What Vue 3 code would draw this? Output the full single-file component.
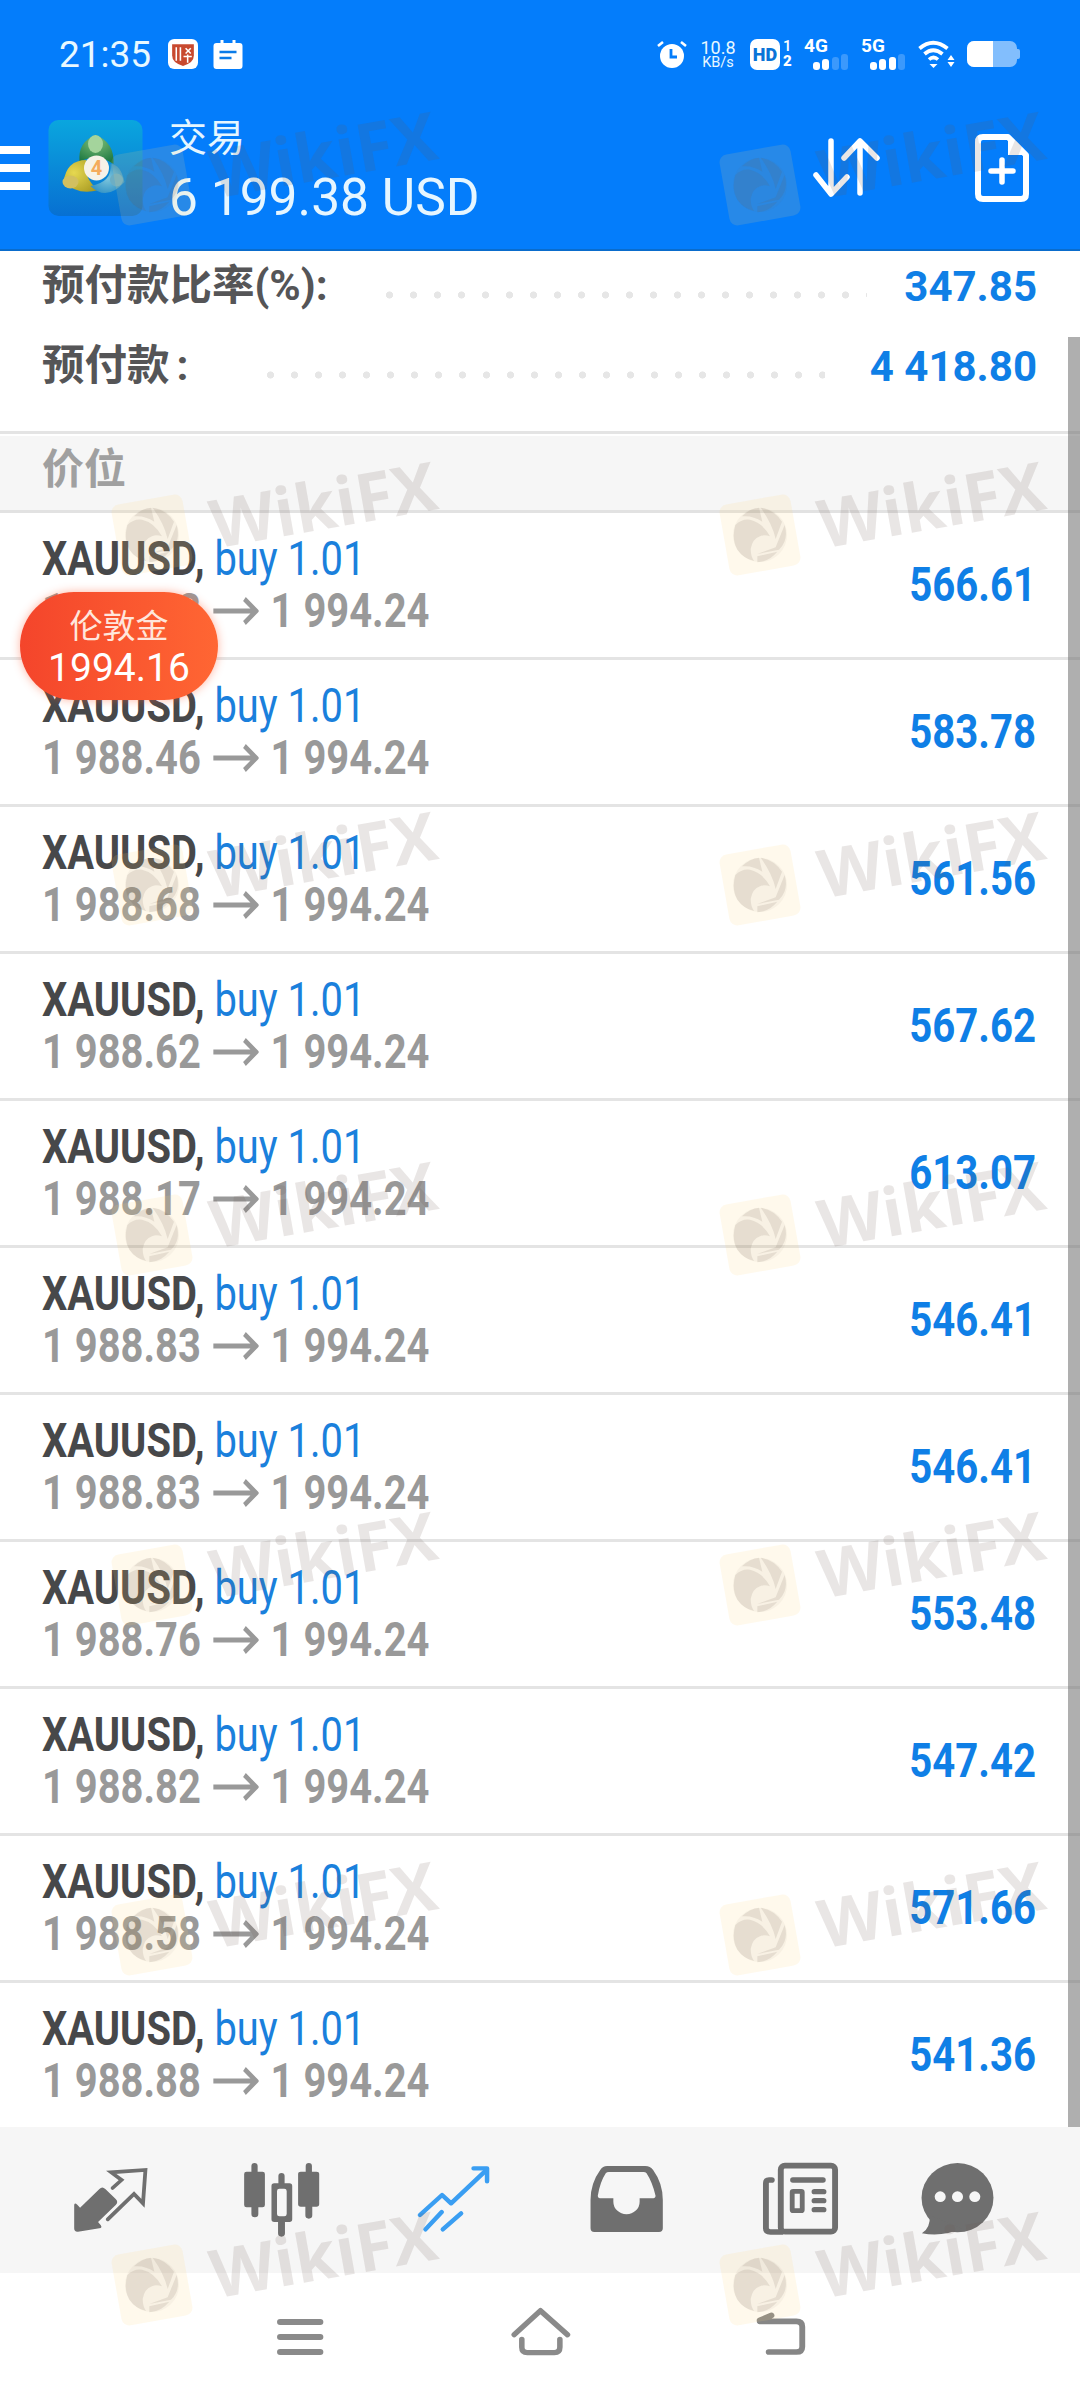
<script setup>
const rows = [
  ['1 988.63', '566.61'], ['1 988.46', '583.78'], ['1 988.68', '561.56'], ['1 988.62', '567.62'],
  ['1 988.17', '613.07'], ['1 988.83', '546.41'], ['1 988.83', '546.41'], ['1 988.76', '553.48'],
  ['1 988.82', '547.42'], ['1 988.58', '571.66'], ['1 988.88', '541.36']
]
const marks = Array.from({ length: 14 }, (_, i) => i)
</script>

<template>
  <div class="screen">
    <header class="header">
      <div class="status">
        <div class="status-left">
          <span class="time">21:35</span>
          <svg class="app-badge" viewBox="0 0 29 29">
            <rect width="29" height="29" rx="6" fill="#fff" />
            <path d="M4 5h21v11q0 7-10.500 10Q4 23 4 16z" fill="#c8492f" />
            <path d="M8 8v13M12 8v13M17 9l5 5M22 9l-5 5M15 17h8M19 15v8" stroke="#fff" stroke-width="1.500" fill="none" />
          </svg>
          <svg class="cal" viewBox="0 0 29 29">
            <path d="M3 3h4V0h3v3h9V0h3v3h4q3 0 3 3v20q0 3-3 3H3q-3 0-3-3V6q0-3 3-3z" fill="#fff" />
            <path d="M6 12h17M6 18h12" stroke="#0a7be8" stroke-width="2.600" />
          </svg>
        </div>
        <div class="status-right">
          <svg class="alarm" viewBox="0 0 30 28">
            <circle cx="15" cy="16" r="12" fill="#fff" />
            <path d="M1 6l5-4M29 6l-5-4" stroke="#fff" stroke-width="2.600" />
            <path d="M14 9v8h6" stroke="#047dfb" stroke-width="2.800" fill="none" />
          </svg>
          <div class="speed"><span>10.8</span><small>KB/s</small></div>
          <div class="hd">
            <span class="hd-box">HD</span>
            <span class="hd-nums"><i>1</i><b>2</b></span>
          </div>
          <div class="sig">
            <span class="sig-g">4G</span>
            <div class="bars">
              <i class="b1"></i><i class="b2"></i><i class="b3 dim"></i><i class="b4 dim"></i>
            </div>
          </div>
          <div class="sig">
            <span class="sig-g">5G</span>
            <div class="bars">
              <i class="b1"></i><i class="b2"></i><i class="b3"></i><i class="b4 dim"></i>
            </div>
          </div>
          <svg class="wifi" viewBox="0 0 37 28">
            <path d="M1.500 8.500Q15-3 29.500 8.500" stroke="#fff" stroke-width="3.800" fill="none" />
            <path d="M6.500 14Q15 6.500 24.500 14" stroke="#fff" stroke-width="3.800" fill="none" />
            <path d="M11 19.500q4.500-4 9 0" stroke="#fff" stroke-width="3.600" fill="none" />
            <path d="M11.500 24h8l-4 4z" fill="#fff" />
            <path d="M33 15l3.500 5h-7zM29.500 22h7l-3.500 5z" fill="#fff" />
          </svg>
          <div class="battery"><i class="batt-fill"></i><i class="batt-nub"></i></div>
        </div>
      </div>
      <div class="toolbar">
        <div class="burger"><i></i><i></i><i></i></div>
        <svg class="mt4" viewBox="0 0 94 96">
          <defs>
            <linearGradient id="mtbg" x1="0" y1="0" x2="0" y2="1">
              <stop offset="0" stop-color="#0aa6de" />
              <stop offset="0.500" stop-color="#0a8ad8" />
              <stop offset="1" stop-color="#0770d2" />
            </linearGradient>
            <radialGradient id="gg" cx="0.500" cy="0.200" r="0.800">
              <stop offset="0" stop-color="#7fbf7a" />
              <stop offset="1" stop-color="#1f7a42" />
            </radialGradient>
            <radialGradient id="gy" cx="0.300" cy="0.400" r="0.800">
              <stop offset="0" stop-color="#e6d850" />
              <stop offset="1" stop-color="#a89a22" />
            </radialGradient>
            <radialGradient id="gb" cx="0.500" cy="0.500" r="0.700">
              <stop offset="0" stop-color="#7cc5dc" />
              <stop offset="1" stop-color="#1f86c0" />
            </radialGradient>
          </defs>
          <rect width="94" height="96" rx="10" fill="url(#mtbg)" />
          <path d="M31 42Q29 22 47 15Q66 22 65 44Q48 32 31 42z" fill="url(#gg)" />
          <ellipse cx="47" cy="24" rx="7.500" ry="9" fill="#a4d49c" />
          <path d="M38 40Q18 40 15 62Q30 76 50 70Q34 58 38 40z" fill="url(#gy)" />
          <ellipse cx="22" cy="62" rx="8" ry="6.500" fill="#d2c060" />
          <path d="M42 66Q58 82 76 62Q72 44 62 44Q64 62 42 66z" fill="url(#gb)" />
          <circle cx="68" cy="60" r="6.500" fill="#6caec4" />
          <circle cx="48" cy="48" r="12.500" fill="#f6f2e8" />
          <text x="48" y="55" class="mt4-4">4</text>
        </svg>
        <div class="titles">
          <span class="t1">交易</span>
          <span class="t2">6 199.38 USD</span>
        </div>
        <svg class="arrows" viewBox="0 0 68 62">
          <path d="M18 4V56M3 38L18 57L34 40" stroke="#fff" stroke-width="5.500" stroke-linecap="round" stroke-linejoin="round" fill="none" />
          <path d="M47 4V56M31 21L47 4L64 21" stroke="#fff" stroke-width="5.500" stroke-linecap="round" stroke-linejoin="round" fill="none" />
        </svg>
        <svg class="doc" viewBox="0 0 54 68">
          <path d="M8 3H33L51 21V60Q51 65 46 65H8Q3 65 3 60V8Q3 3 8 3z" stroke="#fff" stroke-width="6" stroke-linejoin="round" fill="none" />
          <path d="M33 3V21H51z" fill="#fff" />
          <path d="M27 26V48M16 37H38" stroke="#fff" stroke-width="5.500" stroke-linecap="round" />
        </svg>
      </div>
    </header>

    <main class="main">
      <section class="summary">
        <div class="sum-row">
          <span class="sum-label">预付款比率(%):</span>
          <span class="dots d1"></span>
          <span class="sum-value">347.85</span>
        </div>
        <div class="sum-row">
          <span class="sum-label">预付款<span class="colon">:</span></span>
          <span class="dots d2"></span>
          <span class="sum-value">4 418.80</span>
        </div>
      </section>
      <div class="section-head"><span>价位</span></div>
      <div v-for="(r, i) in rows" :key="i" class="row">
        <div class="row-left">
          <div class="l1"><b>XAUUSD,</b> <span class="buy">buy 1.01</span></div>
          <div class="l2">
            <span>{{ r[0] }}</span>
            <svg class="arr" viewBox="0 0 53 28"><path d="M0 14H50M37 2L51 14L37 26" stroke="#999" stroke-width="5" fill="none" /></svg>
            <span>1 994.24</span>
          </div>
        </div>
        <div class="row-value">{{ r[1] }}</div>
      </div>
      <div class="scrollbar"></div>
      <div class="bubble">
        <span class="bub1">伦敦金</span>
        <span class="bub2">1994.16</span>
      </div>
    </main>

    <nav class="tabs">
      <svg viewBox="200 180 240 240" preserveAspectRatio="none">
        <path d="M215 316 Q215 306 224 314 L232 323 L288 267 Q296 258 305 267 L335 297 Q344 306 335 315 L284 366 L292 376 Q297 384 288 385 L226 395 Q215 396 215 385z" fill="#6f6f6f" />
        <path d="M326 264L352 240L322 217L421 210L414 310L388 282L312 358" stroke="#6f6f6f" stroke-width="11" fill="none" stroke-linejoin="miter" stroke-linecap="round" />
      </svg>
      <svg viewBox="697 180 240 240" preserveAspectRatio="none">
        <g fill="#6f6f6f">
          <path d="M730 198a9 9 0 0 1 18 0V215H762q7 0 7 7V315q0 7-7 7H750V342a10 10 0 0 1-20 0V322H716q-7 0-7-7V222q0-7 7-7H730z" />
          <path d="M808 228a9 9 0 0 1 18 0V250H840q8 0 8 8V358q0 8-8 8H827V400a10 10 0 0 1-20 0V366H796q-8 0-8-8V258q0-8 8-8H808z" />
          <path d="M887 198a9 9 0 0 1 18 0V215H918q8 0 8 7V313q0 7-8 7H906V346a10 10 0 0 1-20 0V320H873q-8 0-8-7V222q0-7 8-7H887z" />
        </g>
        <rect x="804" y="266" width="28" height="83" rx="7" fill="#f6f6f6" />
      </svg>
      <svg viewBox="1197 180 240 240" preserveAspectRatio="none">
        <g stroke="#3a9ef2" stroke-width="13" stroke-linecap="round" stroke-linejoin="round" fill="none">
          <path d="M1220 345L1284 285L1310 310L1408 214" />
          <path d="M1375 205H1414V244" />
          <path d="M1236 388L1283 336" />
          <path d="M1286 388L1339 340" />
        </g>
      </svg>
      <svg viewBox="131 180 240 240" preserveAspectRatio="none">
        <path fill-rule="evenodd" fill="#6f6f6f" d="M147 385V300Q147 250 175 210Q182 198 195 198H305Q320 198 328 210Q356 250 356 300V385Q356 396 345 396H158Q147 396 147 385zM168 287Q168 295 178 295H213V305A38 38 0 0 0 289 305V295H325Q335 295 335 287Q325 245 309 220Q306 216 300 216H200Q194 216 191 220Q175 245 168 287z" />
      </svg>
      <svg viewBox="635 180 240 240" preserveAspectRatio="none">
        <g stroke="#6f6f6f" fill="none" stroke-linecap="round">
          <rect x="698" y="197" width="157" height="198" rx="12" stroke-width="17" />
          <path d="M672 240H664Q655 240 655 250V385Q655 396 668 396H700" stroke-width="17" />
          <path d="M733 240H820M795 275H822M795 302H822M795 329H822" stroke-width="16" />
          <rect x="731" y="274" width="29" height="58" rx="3" stroke-width="14" />
        </g>
      </svg>
      <svg viewBox="1093 180 240 240" preserveAspectRatio="none">
        <circle cx="1213" cy="293" r="104" fill="#6f6f6f" />
        <path d="M1133 345Q1135 385 1110 400Q1170 412 1225 385z" fill="#6f6f6f" />
        <g fill="#f6f6f6">
          <circle cx="1163" cy="290" r="16" />
          <circle cx="1213" cy="290" r="16" />
          <circle cx="1263" cy="290" r="16" />
        </g>
      </svg>
    </nav>

    <div class="gesture">
      <svg viewBox="750 600 240 240" preserveAspectRatio="none">
        <path d="M814 666H930M814 711H930M814 756H930" stroke="#8a8a8a" stroke-width="18" stroke-linecap="round" />
      </svg>
      <svg viewBox="1448 600 240 240" preserveAspectRatio="none">
        <path d="M1492 704L1568 632L1646 704" stroke="#8a8a8a" stroke-width="16" stroke-linecap="round" stroke-linejoin="round" fill="none" />
        <path d="M1514 718V742Q1514 758 1530 758H1608Q1624 758 1624 742V718" stroke="#8a8a8a" stroke-width="16" stroke-linecap="round" fill="none" />
      </svg>
      <svg viewBox="579 600 240 240" preserveAspectRatio="none">
        <path d="M636 664H742Q759 664 759 680V740Q759 756 742 756H662M636 661L670 646" stroke="#868686" stroke-width="17" stroke-linecap="round" fill="none" />
      </svg>
    </div>

    <div class="marks">
      <svg v-for="m in marks" :key="m" class="mark" viewBox="0 0 340 170">
        <rect x="12" y="49" width="72" height="72" rx="8" fill="#ffd878" fill-opacity="0.140" transform="rotate(-10 48 85)" />
        <circle cx="48" cy="85" r="27" fill="#6e5a50" fill-opacity="0.050" />
        <g transform="translate(48 85) scale(0.333) translate(-158 -148)" fill="#6e5a50" fill-opacity="0.130">
          <path d="M84 118Q104 98 128 102Q165 110 188 152Q170 146 158 152Q135 160 130 190Q130 212 140 226Q108 218 90 192Q72 160 84 118z" />
          <path d="M104 92Q128 68 155 66L165 108Q135 88 104 92z" />
          <path d="M160 66Q200 72 224 108L205 160Q195 115 160 66z" />
          <path d="M232 118Q245 165 215 192L150 205L205 185z" />
          <path d="M150 212L210 198Q185 228 150 230z" />
        </g>
        <text class="mark-text" x="219" y="53" transform="rotate(-10 219 53)">WikiFX</text>
      </svg>
    </div>
  </div>
</template>

<style>
html, body { margin: 0; background: #fff; }
</style>

<style scoped>
.screen {
  position: relative;
  width: 1080px;
  height: 2400px;
  overflow: hidden;
  background: #fff;
  display: flex;
  flex-direction: column;
  font-family: Roboto, "Noto Sans CJK SC", sans-serif;
}
.header {
  height: 251px;
  flex: none;
  box-sizing: border-box;
  background: #047dfb;
  border-bottom: 2px solid #0a6ccc;
  color: #fff;
}
.status {
  height: 86px;
  display: flex;
  justify-content: space-between;
  align-items: center;
  box-sizing: border-box;
  padding: 22px 63px 0 59px;
  color: #e8f8ff;
}
.status-left, .status-right { display: flex; align-items: center; }
.time { font-size: 37px; line-height: 40px; width: 93px; margin-top: 2px; }
.app-badge { width: 30px; height: 30px; margin-left: 16px; }
.cal { width: 30px; height: 29px; margin-left: 15px; }
.status-right { height: 32px; }
.alarm { width: 30px; height: 28px; }
.speed {
  margin-left: 13px;
  width: 36px;
  display: flex;
  flex-direction: column;
  align-items: center;
  font-size: 18px;
  line-height: 17px;
}
.speed small { font-size: 14.500px; line-height: 14px; }
.hd { margin-left: 14px; display: flex; align-items: center; width: 42px; }
.hd-box {
  width: 30px;
  height: 31px;
  flex: none;
  border-radius: 7px;
  background: #fff;
  color: #0a74d8;
  font-weight: 900;
  font-size: 18px;
  line-height: 31px;
  text-align: center;
  overflow: hidden;
}
.hd-nums {
  display: flex;
  flex-direction: column;
  margin-left: 3px;
  font-size: 15px;
  line-height: 15px;
  font-weight: 700;
  color: #fff;
}
.hd-nums i { font-style: normal; font-weight: 500; }
.sig { width: 44px; margin-left: 12px; display: flex; flex-direction: column; }
.sig + .sig { margin-left: 13px; }
.sig-g { font-size: 19px; line-height: 16px; font-weight: 700; color: #fff; }
.bars { display: flex; align-items: flex-end; gap: 2.500px; height: 16px; margin-left: 9px; }
.bars i { display: block; width: 7px; border-radius: 3px; background: #fff; }
.bars .b1 { height: 8px; }
.bars .b2 { height: 11px; }
.bars .b3 { height: 13px; }
.bars .b4 { height: 16px; }
.bars .dim { background: rgba(255, 255, 255, 0.22); }
.wifi { width: 37px; height: 28px; margin-left: 13px; }
.battery {
  position: relative;
  width: 50px;
  height: 26px;
  margin-left: 12px;
  border-radius: 7px;
  background: rgba(255, 255, 255, 0.5);
}
.batt-fill {
  display: block;
  width: 26px;
  height: 26px;
  border-radius: 7px 0 0 7px;
  background: #fff;
}
.batt-nub {
  position: absolute;
  left: 50px;
  top: 8px;
  width: 3px;
  height: 10px;
  border-radius: 0 2px 2px 0;
  background: rgba(255, 255, 255, 0.5);
}
.toolbar {
  height: 163px;
  display: flex;
  align-items: center;
}
.burger { width: 30px; display: flex; flex-direction: column; gap: 10px; }
.burger i { display: block; height: 8px; background: #fff; }
.mt4 { width: 95px; height: 96px; margin-left: 18px; }
.mt4-4 { font: 700 20px Roboto, sans-serif; fill: #f4ab5c; text-anchor: middle; }
.titles { margin-left: 26px; margin-top: 10px; display: flex; flex-direction: column; width: 644px; color: #e6f6ff; }
.t1 { font-size: 38px; line-height: 50px; }
.t2 { font-size: 51.500px; line-height: 70px; white-space: nowrap; }
.arrows { width: 68px; height: 62px; flex: none; }
.doc { width: 54px; height: 68px; flex: none; margin-left: 94px; }

.main {
  position: relative;
  height: 1876px;
  flex: none;
  overflow: hidden;
}
.summary {
  box-sizing: border-box;
  height: 183px;
  padding: 10px 43px 0 42px;
  display: flex;
  flex-direction: column;
  gap: 30px;
  border-bottom: 3px solid #e4e4e4;
}
.sum-row { display: flex; align-items: center; height: 50px; }
.sum-label { font-size: 42.500px; font-weight: 700; color: #555557; line-height: 50px; white-space: nowrap; }
.colon { margin-left: 7px; }
.dots {
  flex: 1;
  height: 8px;
  margin-top: 18px;
  background-image: radial-gradient(circle at 3.500px 4px, #e6e6e6 3.300px, transparent 3.800px);
  background-size: 24px 8px;
  background-repeat: repeat-x;
}
.d1 { margin-left: 58px; margin-right: 37px; }
.d2 { margin-left: 78px; margin-right: 45px; }
.sum-value { font-size: 42px; font-weight: 700; color: #0f7fe6; white-space: nowrap; }
.section-head {
  margin-top: 2px;
  height: 74px;
  background: #f6f6f6;
  border-bottom: 3px solid #e2e2e2;
  padding-left: 42px;
  font-size: 42px;
  font-weight: 700;
  color: #a0a0a0;
  line-height: 68px;
}
.row {
  box-sizing: border-box;
  height: 147px;
  border-bottom: 3px solid #e4e4e4;
  display: flex;
  justify-content: space-between;
  align-items: center;
  padding: 0 44px 0 42px;
}
.row-left { transform: scaleX(0.84); transform-origin: left center; white-space: nowrap; font-size: 47.500px; line-height: 52px; }
.l1 { color: #47484a; }
.l1 b { font-weight: 700; }
.buy { color: #1a80dc; font-weight: 400; }
.l2 { color: #999; font-weight: 700; display: flex; align-items: center; }
.arr { width: 55px; height: 28px; margin: 0 14px; flex: none; }
.row-value { transform: scaleX(0.845); transform-origin: right center; font-size: 47.500px; font-weight: 700; color: #0f7fe6; }
.scrollbar {
  position: absolute;
  right: 0;
  top: 86px;
  bottom: 0;
  width: 12px;
  background: rgba(110, 110, 110, 0.55);
}
.bubble {
  position: absolute;
  left: 20px;
  top: 341px;
  width: 198px;
  height: 108px;
  border-radius: 54px;
  background: linear-gradient(90deg, #f4452b, #ff6633);
  box-shadow: 0 0 10px rgba(255, 90, 50, 0.45);
  color: #fff;
  display: flex;
  flex-direction: column;
  align-items: center;
  justify-content: center;
}
.bub1 { font-size: 33px; line-height: 40px; color: #ffe6dc; margin-top: 4px; }
.bub2 { font-size: 39px; line-height: 42px; }

.tabs {
  height: 146px;
  flex: none;
  background: #f6f6f6;
  display: flex;
  align-items: center;
}
.tabs svg { width: 83px; height: 80px; flex: none; }
.tabs svg:nth-child(1) { margin-left: 69px; }
.tabs svg:nth-child(2) { margin-left: 88px; }
.tabs svg:nth-child(3) { margin-left: 89px; }
.tabs svg:nth-child(4) { margin-left: 90px; }
.tabs svg:nth-child(5) { margin-left: 91px; }
.tabs svg:nth-child(6) { margin-left: 74px; }
.gesture {
  flex: 1;
  display: flex;
  align-items: flex-start;
  padding: 27px 0 0 258px;
}
.gesture svg { width: 83px; height: 80px; flex: none; }
.gesture svg:nth-child(2) { margin-left: 158px; }
.gesture svg:nth-child(3) { margin-left: 158px; }
.marks {
  position: absolute;
  left: 104px;
  top: 100px;
  width: 976px;
  display: grid;
  grid-template-columns: 608px 340px;
  grid-auto-rows: 350px;
  pointer-events: none;
}
.mark { width: 340px; height: 170px; display: block; overflow: visible; }
.mark-text {
  font: 700 67px "Open Sans", sans-serif;
  fill: #6e5a50;
  fill-opacity: 0.15;
  text-anchor: middle;
  dominant-baseline: central;
}
</style>
